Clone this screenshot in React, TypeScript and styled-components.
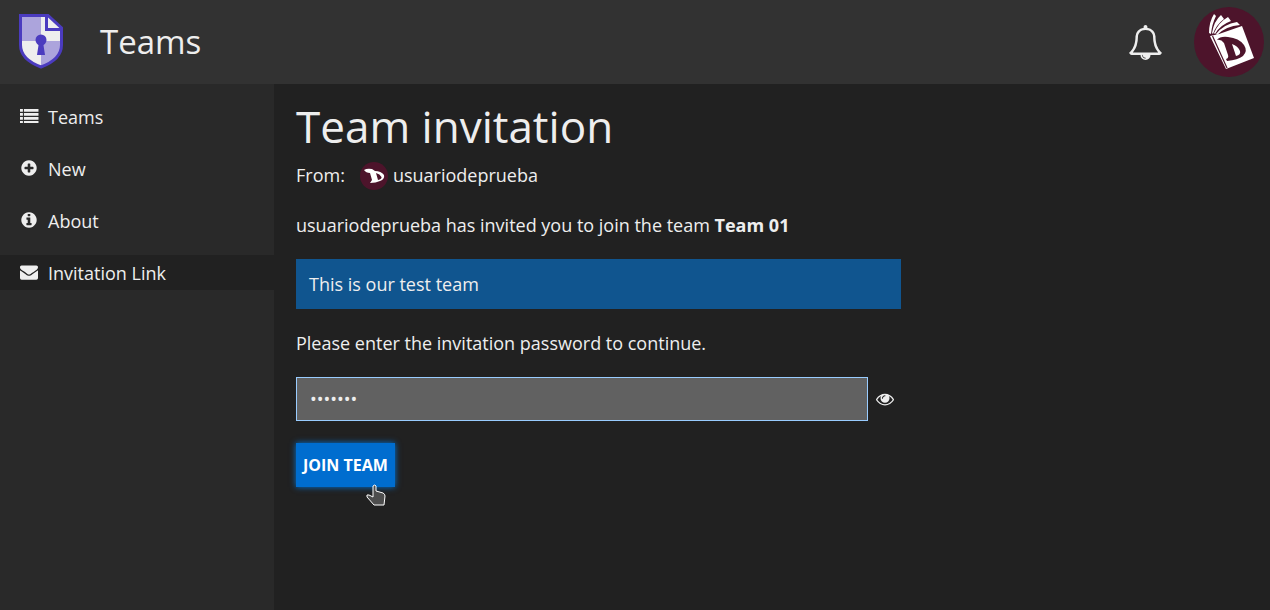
import React, { useState } from "react";
import styled, { createGlobalStyle, css } from "styled-components";

const GlobalStyle = createGlobalStyle`
  *, *::before, *::after { box-sizing: border-box; }
  body {
    margin: 0;
    background: #212121;
    color: #eeeeee;
    font-family: "Open Sans", "Noto Sans", sans-serif;
    font-size: 18px;
    line-height: 24px;
  }
`;

const Page = styled.div`
  display: flex;
  flex-direction: column;
  min-height: 100vh;
`;

const Toolbar = styled.header`
  display: flex;
  align-items: center;
  height: 84px;
  padding: 0 6px 0 18px;
  background: #323232;
`;

const AppTitle = styled.span`
  flex: 1;
  margin-left: 36px;
  font-size: 33px;
  line-height: 48px;
`;

const IconButton = styled.button`
  display: flex;
  padding: 0;
  border: 0;
  background: none;
  color: inherit;
  cursor: pointer;
`;

const AccountButton = styled(IconButton)`
  margin-left: 31px;
`;

const Body = styled.div`
  display: flex;
  flex: 1;
`;

const Sidebar = styled.nav`
  display: flex;
  flex-direction: column;
  gap: 17px;
  flex: 0 0 274px;
  padding-top: 15px;
  background: #292929;
`;

const NavLink = styled.a<{ $active?: boolean }>`
  display: flex;
  align-items: center;
  gap: 10px;
  height: 35px;
  padding-left: 20px;
  color: inherit;
  text-decoration: none;
  ${(p) => p.$active && css`background: #212121;`}
  svg { margin-bottom: 2px; }
`;

const Main = styled.main`
  flex: 1;
  padding: 12px 22px;
`;

const Heading = styled.h1`
  margin: 0;
  font-size: 44px;
  font-weight: 400;
  line-height: 60px;
`;

const Form = styled.form`
  max-width: 605px;
`;

const Sender = styled.div`
  display: flex;
  align-items: center;
  height: 37px;
`;

const SenderAvatar = styled.span`
  display: flex;
  margin: 3px 5px 0 15px;
`;

const Paragraph = styled.p`
  display: block;
  margin: 20px 0 22px;
`;

const Notice = styled.div`
  margin: 22px 0;
  padding: 13px;
  background: #10558f;
`;

const PasswordRow = styled.div`
  display: flex;
  align-items: center;
  gap: 8px;
  margin-bottom: 22px;
`;

const PasswordInput = styled.input`
  flex: 1;
  height: 44px;
  padding: 0 13px;
  border: 1px solid #99ccff;
  border-radius: 0;
  outline: 0;
  background: #616161;
  color: #eeeeee;
  font: inherit;
`;

const RevealButton = styled(IconButton)`
  margin-right: 7px;
`;

const JoinArea = styled.div`
  position: relative;
  width: max-content;
`;

const JoinButton = styled.button`
  height: 44px;
  padding: 0 7px;
  border: 0;
  background: #006dcf;
  box-shadow: 0 0 6px #0275d8;
  color: #ffffff;
  font: inherit;
  font-size: 16px;
  font-weight: 700;
  text-transform: uppercase;
  cursor: pointer;
`;

const Pointer = styled.svg`
  position: absolute;
  right: 8px;
  bottom: -19px;
`;

const circle = "M1664 896q0 209-103 385.5t-279.5 279.5-385.5 103-385.5-103-279.5-279.5-103-385.5 103-385.5 279.5-279.5 385.5-103 385.5 103 279.5 279.5 103 385.5z";

const icons = {
  list: "M0 200h290v270h-290zM390 200h1450v270h-1450zM0 600h290v270h-290zM390 600h1450v270h-1450zM0 1000h290v270h-290zM390 1000h1450v270h-1450zM0 1400h290v200h-290zM390 1400h1450v200h-1450z",
  plus: "M1344 960v-128q0-26-19-45t-45-19h-256v-256q0-26-19-45t-45-19h-128q-26 0-45 19t-19 45v256h-256q-26 0-45 19t-19 45v128q0 26 19 45t45 19h256v256q0 26 19 45t45 19h128q26 0 45-19t19-45v-256h256q26 0 45-19t19-45z" + circle,
  info: "M1152 1376v-160q0-14-9-23t-23-9h-96v-512q0-14-9-23t-23-9h-320q-14 0-23 9t-9 23v160q0 14 9 23t23 9h96v320h-96q-14 0-23 9t-9 23v160q0 14 9 23t23 9h448q14 0 23-9t9-23zM1024 480v-160q0-14-9-23t-23-9h-192q-14 0-23 9t-9 23v160q0 14 9 23t23 9h192q14 0 23-9t9-23z" + circle,
  envelope: "M1792 710v794q0 66-47 113t-113 47h-1472q-66 0-113-47t-47-113v-794q44 49 101 87 362 246 497 345 57 42 92.5 65.5t94.5 48 110 24.5h2q51 0 110-24.5t94.5-48 92.5-65.5q170-123 498-345 57-39 100-87zm0-294q0 79-49 151t-122 123q-376 261-468 325-10 7-42.5 31t-54 38.5-52 32.5-57.5 27-50 9h-2q-23 0-50-9t-57.5-27-52-32.5-54-38.5-42.5-31q-91-64-262-182.5t-205-142.5q-62-42-117-115.5t-55-136.5q0-78 41.5-130t118.5-52h1472q65 0 112.5 47t47.5 113z",
  eye: "M1664 960q-152-236-381-353 61 104 61 225 0 185-131.5 316.5t-316.5 131.5-316.5-131.5-131.5-316.5q0-121 61-225-229 117-381 353 133 205 333.5 326.5t434.5 121.5 434.5-121.5 333.5-326.5zm-720-384q0-20-14-34t-34-14q-125 0-214.5 89.5t-89.5 214.5q0 20 14 34t34 14 34-14 14-34q0-86 61-147t147-61q20 0 34-14t14-34zm848 384q0 34-20 69-140 230-376.5 368.5t-499.5 138.5-499.5-139-376.5-368q-20-35-20-69t20-69q140-229 376.5-368t499.5-139 499.5 139 376.5 368q20 35 20 69z",
  bell: "M912 1696q0-16-16-16-59 0-101.5-42.5t-42.5-101.5q0-16-16-16t-16 16q0 73 51.5 124.5t124.5 51.5q16 0 16-16zm-666-288h1300q-266-300-266-832 0-51-24-105t-69-103-121.5-80.5-169.5-31.5-169.5 31.5-121.5 80.5-69 103-24 105q0 532-266 832zm1482 0q0 52-38 90t-90 38h-448q0 106-75 181t-181 75-181-75-75-181h-448q-52 0-90-38t-38-90q50-42 91-88t85-119.5 74.5-158.5 50-206 19.5-260q0-152 117-282.5t307-158.5q-8-19-8-39 0-40 28-68t68-28 68 28 28 68q0 20-8 39 190 28 307 158.5t117 282.5q0 139 19.5 260t50 206 74.5 158.5 85 119.5 91 88z",
};

const IconSvg = styled.svg`
  overflow: visible;
`;

function Icon({ name, size = 18 }: { name: keyof typeof icons; size?: number }) {
  return (
    <IconSvg width={size} height={size} viewBox="0 0 1792 1792" fill="currentColor" aria-hidden="true">
      <path d={icons[name]} />
    </IconSvg>
  );
}

function Logo() {
  return (
    <svg width="46" height="56" viewBox="0 0 46 56" aria-hidden="true">
      <path d="M2.500 1.500H30L43.500 14V31C43.500 42 35 48.500 23 53C11 48.500 2.500 42 2.500 31Z" fill="#eeeeee" />
      <path d="M3 2H23V27H3ZM23 27H43V31C43 42 35 48 23 52Z" fill="#aca4dc" />
      <path d="M2.500 1.500H30L43.500 14V31C43.500 42 35 48.500 23 53C11 48.500 2.500 42 2.500 31Z" fill="none" stroke="#4b3bbf" strokeWidth="3" />
      <path d="M28.500 2V15.500H43" fill="none" stroke="#4b3bbf" strokeWidth="3" />
      <circle cx="23" cy="26" r="5.500" fill="#4b3bbf" />
      <path d="M21 28H25L27 41H19Z" fill="#4b3bbf" />
    </svg>
  );
}

function BookAvatar() {
  return (
    <svg width="70" height="70" viewBox="0 0 70 70" aria-hidden="true">
      <circle cx="35" cy="35" r="35" fill="#4d142b" />
      <g fill="#ffffff">
        <path d="M16 29L25 27L48 19L60 51L32 62Z" />
        <path d="M15 26Q15 15 20 7L22 9Q18 17 17 27Z" />
        <path d="M18 26Q20 14 27 8L30 12Q22 18 19 27Z" />
        <path d="M20 26Q25 15 34 10L37 14Q26 18 21 27Z" />
        <path d="M22 27Q30 17 43 15L46 18Q32 19 23 28Z" />
      </g>
      <path d="M18.500 29L33 61" stroke="#4d142b" strokeWidth="1.200" />
      <path d="M23 33Q26 29 34 30Q45 31 50 38Q54 44 49 49Q44 53 33 54L32 52Q35 51 34 48L30 36Q27 32 23 33ZM38 37L42 49Q47 48 46 44Q44 39 38 37Z" fill="#4d142b" fillRule="evenodd" />
    </svg>
  );
}

function InitialAvatar() {
  return (
    <svg width="28" height="28" viewBox="0 0 28 28" aria-hidden="true">
      <circle cx="14" cy="14" r="14" fill="#4d142b" />
      <path d="M4 8Q7 6 12 7L15 9Q21 9 24 13Q25 17 20 19Q16 21 10 21L12 18L10 11Q6 11 4 8ZM16 11L18 18Q22 17 21.500 15Q20 12 16 11Z" fill="#ffffff" fillRule="evenodd" />
    </svg>
  );
}

const links: { icon: keyof typeof icons; label: string; active?: boolean }[] = [
  { icon: "list", label: "Teams" },
  { icon: "plus", label: "New" },
  { icon: "info", label: "About" },
  { icon: "envelope", label: "Invitation Link", active: true },
];

export default function App() {
  const [password, setPassword] = useState("testing");
  const [visible, setVisible] = useState(false);
  return (
    <Page>
      <GlobalStyle />
      <Toolbar>
        <Logo />
        <AppTitle>Teams</AppTitle>
        <IconButton type="button" aria-label="Notifications"><Icon name="bell" size={35} /></IconButton>
        <AccountButton type="button" aria-label="Account"><BookAvatar /></AccountButton>
      </Toolbar>
      <Body>
        <Sidebar>
          {links.map((l) => (
            <NavLink key={l.label} href="#" $active={l.active} aria-current={l.active ? "page" : undefined}>
              <Icon name={l.icon} />
              {l.label}
            </NavLink>
          ))}
        </Sidebar>
        <Main>
          <Heading>Team invitation</Heading>
          <Sender>
            From:
            <SenderAvatar><InitialAvatar /></SenderAvatar>
            usuariodeprueba
          </Sender>
          <Form onSubmit={(e) => e.preventDefault()}>
            <Paragraph>usuariodeprueba has invited you to join the team <strong>Team 01</strong></Paragraph>
            <Notice>This is our test team</Notice>
            <Paragraph as="label" htmlFor="password">Please enter the invitation password to continue.</Paragraph>
            <PasswordRow>
              <PasswordInput
                id="password"
                type={visible ? "text" : "password"}
                value={password}
                onChange={(e) => setPassword(e.target.value)}
              />
              <RevealButton type="button" aria-label="Show password" onClick={() => setVisible(!visible)}>
                <Icon name="eye" />
              </RevealButton>
            </PasswordRow>
            <JoinArea>
              <JoinButton type="submit">Join team</JoinButton>
              <Pointer width="22" height="22" viewBox="0 0 22 22" aria-hidden="true">
                <path d="M8 2Q10 0 11 2V7L18 9Q20 10 20 12L19 21H9L2 13Q1 10 4 11L8 13Z" fill="#4d4d4d" stroke="#ffffff" />
              </Pointer>
            </JoinArea>
          </Form>
        </Main>
      </Body>
    </Page>
  );
}
